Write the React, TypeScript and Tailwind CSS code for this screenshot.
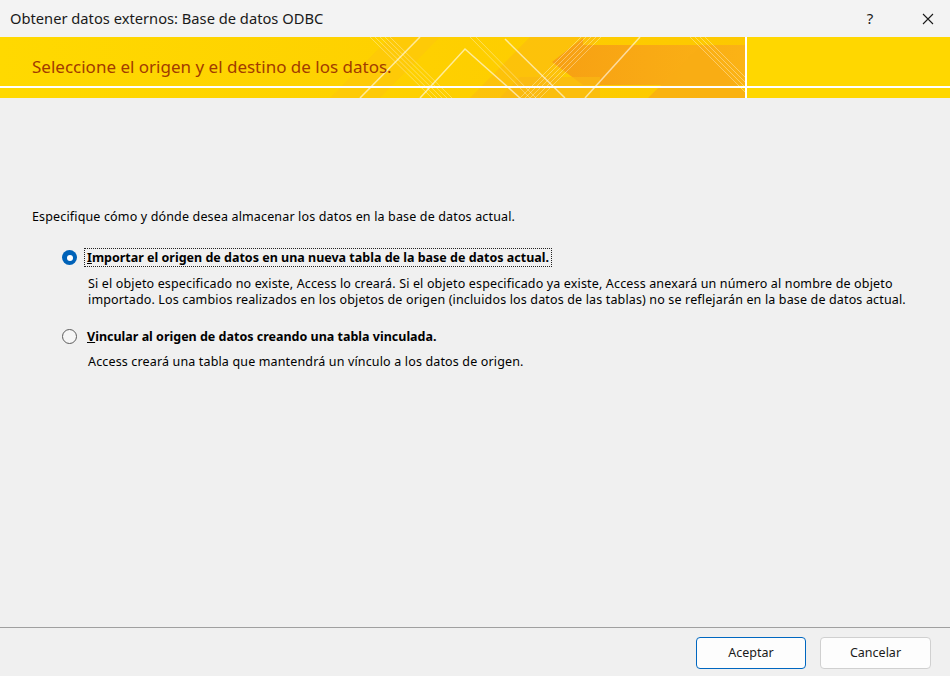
import React from "react";

const font = { fontFamily: '"Noto Sans", "Open Sans", Arial, sans-serif' };

function Banner() {
  return (
    <svg className="absolute inset-0" width="950" height="61" viewBox="0 0 950 61">
      <defs>
        <linearGradient id="base" x1="0" y1="0" x2="1" y2="0">
          <stop offset="0" stopColor="#ffd900" />
          <stop offset="0.45" stopColor="#fed000" />
          <stop offset="1" stopColor="#fcc300" />
        </linearGradient>
        <linearGradient id="org" x1="0" y1="0" x2="1" y2="0">
          <stop offset="0" stopColor="#f7a013" />
          <stop offset="1" stopColor="#fbb315" />
        </linearGradient>
      </defs>
      <rect x="0" y="0" width="950" height="61" fill="url(#base)" />
      <rect x="747" y="0" width="203" height="61" fill="#ffd700" />
      <polygon points="330,61 390,0 440,0 380,61" fill="#fdc80a" opacity="0.7" />
      <polygon points="470,61 530,0 600,0 540,61" fill="#fbbb10" opacity="0.6" />
      <polygon points="552,25 583,1 583,8 745,8 745,48 583,48 583,48" fill="url(#org)" />
      <polygon points="648,61 700,10 745,55 745,61" fill="#f9ad14" opacity="0.8" />
      <polygon points="500,61 520,40 600,40 600,61" fill="#fab812" opacity="0.7" />
      <g stroke="#fff" strokeOpacity="0.35" strokeWidth="1">
        <line x1="370" y1="0" x2="432" y2="61" />
        <line x1="375" y1="0" x2="437" y2="61" />
        <line x1="380" y1="0" x2="442" y2="61" />
        <line x1="385" y1="0" x2="447" y2="61" />
        <line x1="390" y1="0" x2="452" y2="61" />
        <line x1="520" y1="61" x2="581" y2="0" />
        <line x1="525" y1="61" x2="586" y2="0" />
        <line x1="530" y1="61" x2="591" y2="0" />
        <line x1="535" y1="61" x2="596" y2="0" />
        <line x1="540" y1="61" x2="601" y2="0" />
        <line x1="690" y1="0" x2="745" y2="55" />
        <line x1="695" y1="0" x2="745" y2="50" />
        <line x1="700" y1="0" x2="745" y2="45" />
        <line x1="705" y1="0" x2="745" y2="40" />
        <line x1="470" y1="0" x2="530" y2="61" />
        <line x1="476" y1="0" x2="536" y2="61" />
      </g>
      <g stroke="#fff" strokeOpacity="0.6" strokeWidth="1.5" fill="none">
        <polyline points="420,61 465,12 520,61" />
        <line x1="420" y1="0" x2="360" y2="61" />
        <line x1="585" y1="61" x2="640" y2="0" />
        <line x1="505" y1="2" x2="565" y2="61" />
      </g>
      <rect x="0" y="49" width="950" height="2" fill="#fff" />
      <rect x="745" y="0" width="2" height="61" fill="#fff" />
    </svg>
  );
}

function Radio({ checked }: { checked: boolean }) {
  return checked ? (
    <span className="w-[15px] h-[15px] rounded-full bg-[#0062b8] flex items-center justify-center shrink-0">
      <span className="w-[6px] h-[6px] rounded-full bg-white" />
    </span>
  ) : (
    <span className="w-[15px] h-[15px] rounded-full border border-[#5c5c5c] bg-[#f6f6f6] shrink-0" />
  );
}

export default function App() {
  return (
    <div className="w-[950px] h-[676px] bg-[#f0f0f0] flex flex-col text-[#000] overflow-hidden" style={font}>
      <div className="h-[37px] bg-[#f3f3f3] flex items-center pl-[10px] text-[14.7px] text-[#1a1a1a]">
        <span className="flex-1">Obtener datos externos: Base de datos ODBC</span>
        <span className="w-[20px] text-center text-[15px] mr-[42px]">?</span>
        <svg width="12" height="12" viewBox="0 0 12 12" className="mr-[16px]">
          <path d="M1 1L11 11M11 1L1 11" stroke="#1a1a1a" strokeWidth="1.1" />
        </svg>
      </div>
      <div className="relative h-[61px] border-b border-[#d8d8d8]">
        <Banner />
        <div className="relative pl-[32px] pt-[17px] text-[17px] text-[#a23b00] leading-[26px]">
          Seleccione el origen y el destino de los datos.
        </div>
      </div>
      <div className="flex-1 pt-[111px] pl-[32px] text-[12.5px] leading-[16px] tracking-[0.15px]">
        <div>Especifique cómo y dónde desea almacenar los datos en la base de datos actual.</div>
        <div className="mt-[23px] ml-[30px] flex items-center gap-[7px]">
          <Radio checked />
          <span className="font-bold tracking-normal border border-dotted border-[#222] px-[2px] leading-[17px]">
            <u>I</u>mportar el origen de datos en una nueva tabla de la base de datos actual.
          </span>
        </div>
        <div className="ml-[56px] mt-[9px] w-[840px]">
          Si el objeto especificado no existe, Access lo creará. Si el objeto especificado ya existe, Access anexará un número al nombre de objeto<br />
          importado. Los cambios realizados en los objetos de origen (incluidos los datos de las tablas) no se reflejarán en la base de datos actual.
        </div>
        <div className="mt-[19px] ml-[30px] flex items-center gap-[7px]">
          <Radio checked={false} />
          <span className="font-bold tracking-normal px-[3px] leading-[19px]">
            <u>V</u>incular al origen de datos creando una tabla vinculada.
          </span>
        </div>
        <div className="ml-[56px] mt-[8px]">Access creará una tabla que mantendrá un vínculo a los datos de origen.</div>
      </div>
      <div className="h-[49px] border-t border-[#a0a0a0] flex items-start justify-end gap-[14px] pt-[9px] pr-[19px] text-[12.5px]">
        <button className="w-[110px] h-[32px] rounded-[4px] border border-[#0067c0] bg-[#fdfdfd] text-[#1a1a1a]">
          Aceptar
        </button>
        <button className="w-[111px] h-[32px] rounded-[4px] border border-[#d0d0d0] bg-[#fdfdfd] text-[#1a1a1a]">
          Cancelar
        </button>
      </div>
    </div>
  );
}
